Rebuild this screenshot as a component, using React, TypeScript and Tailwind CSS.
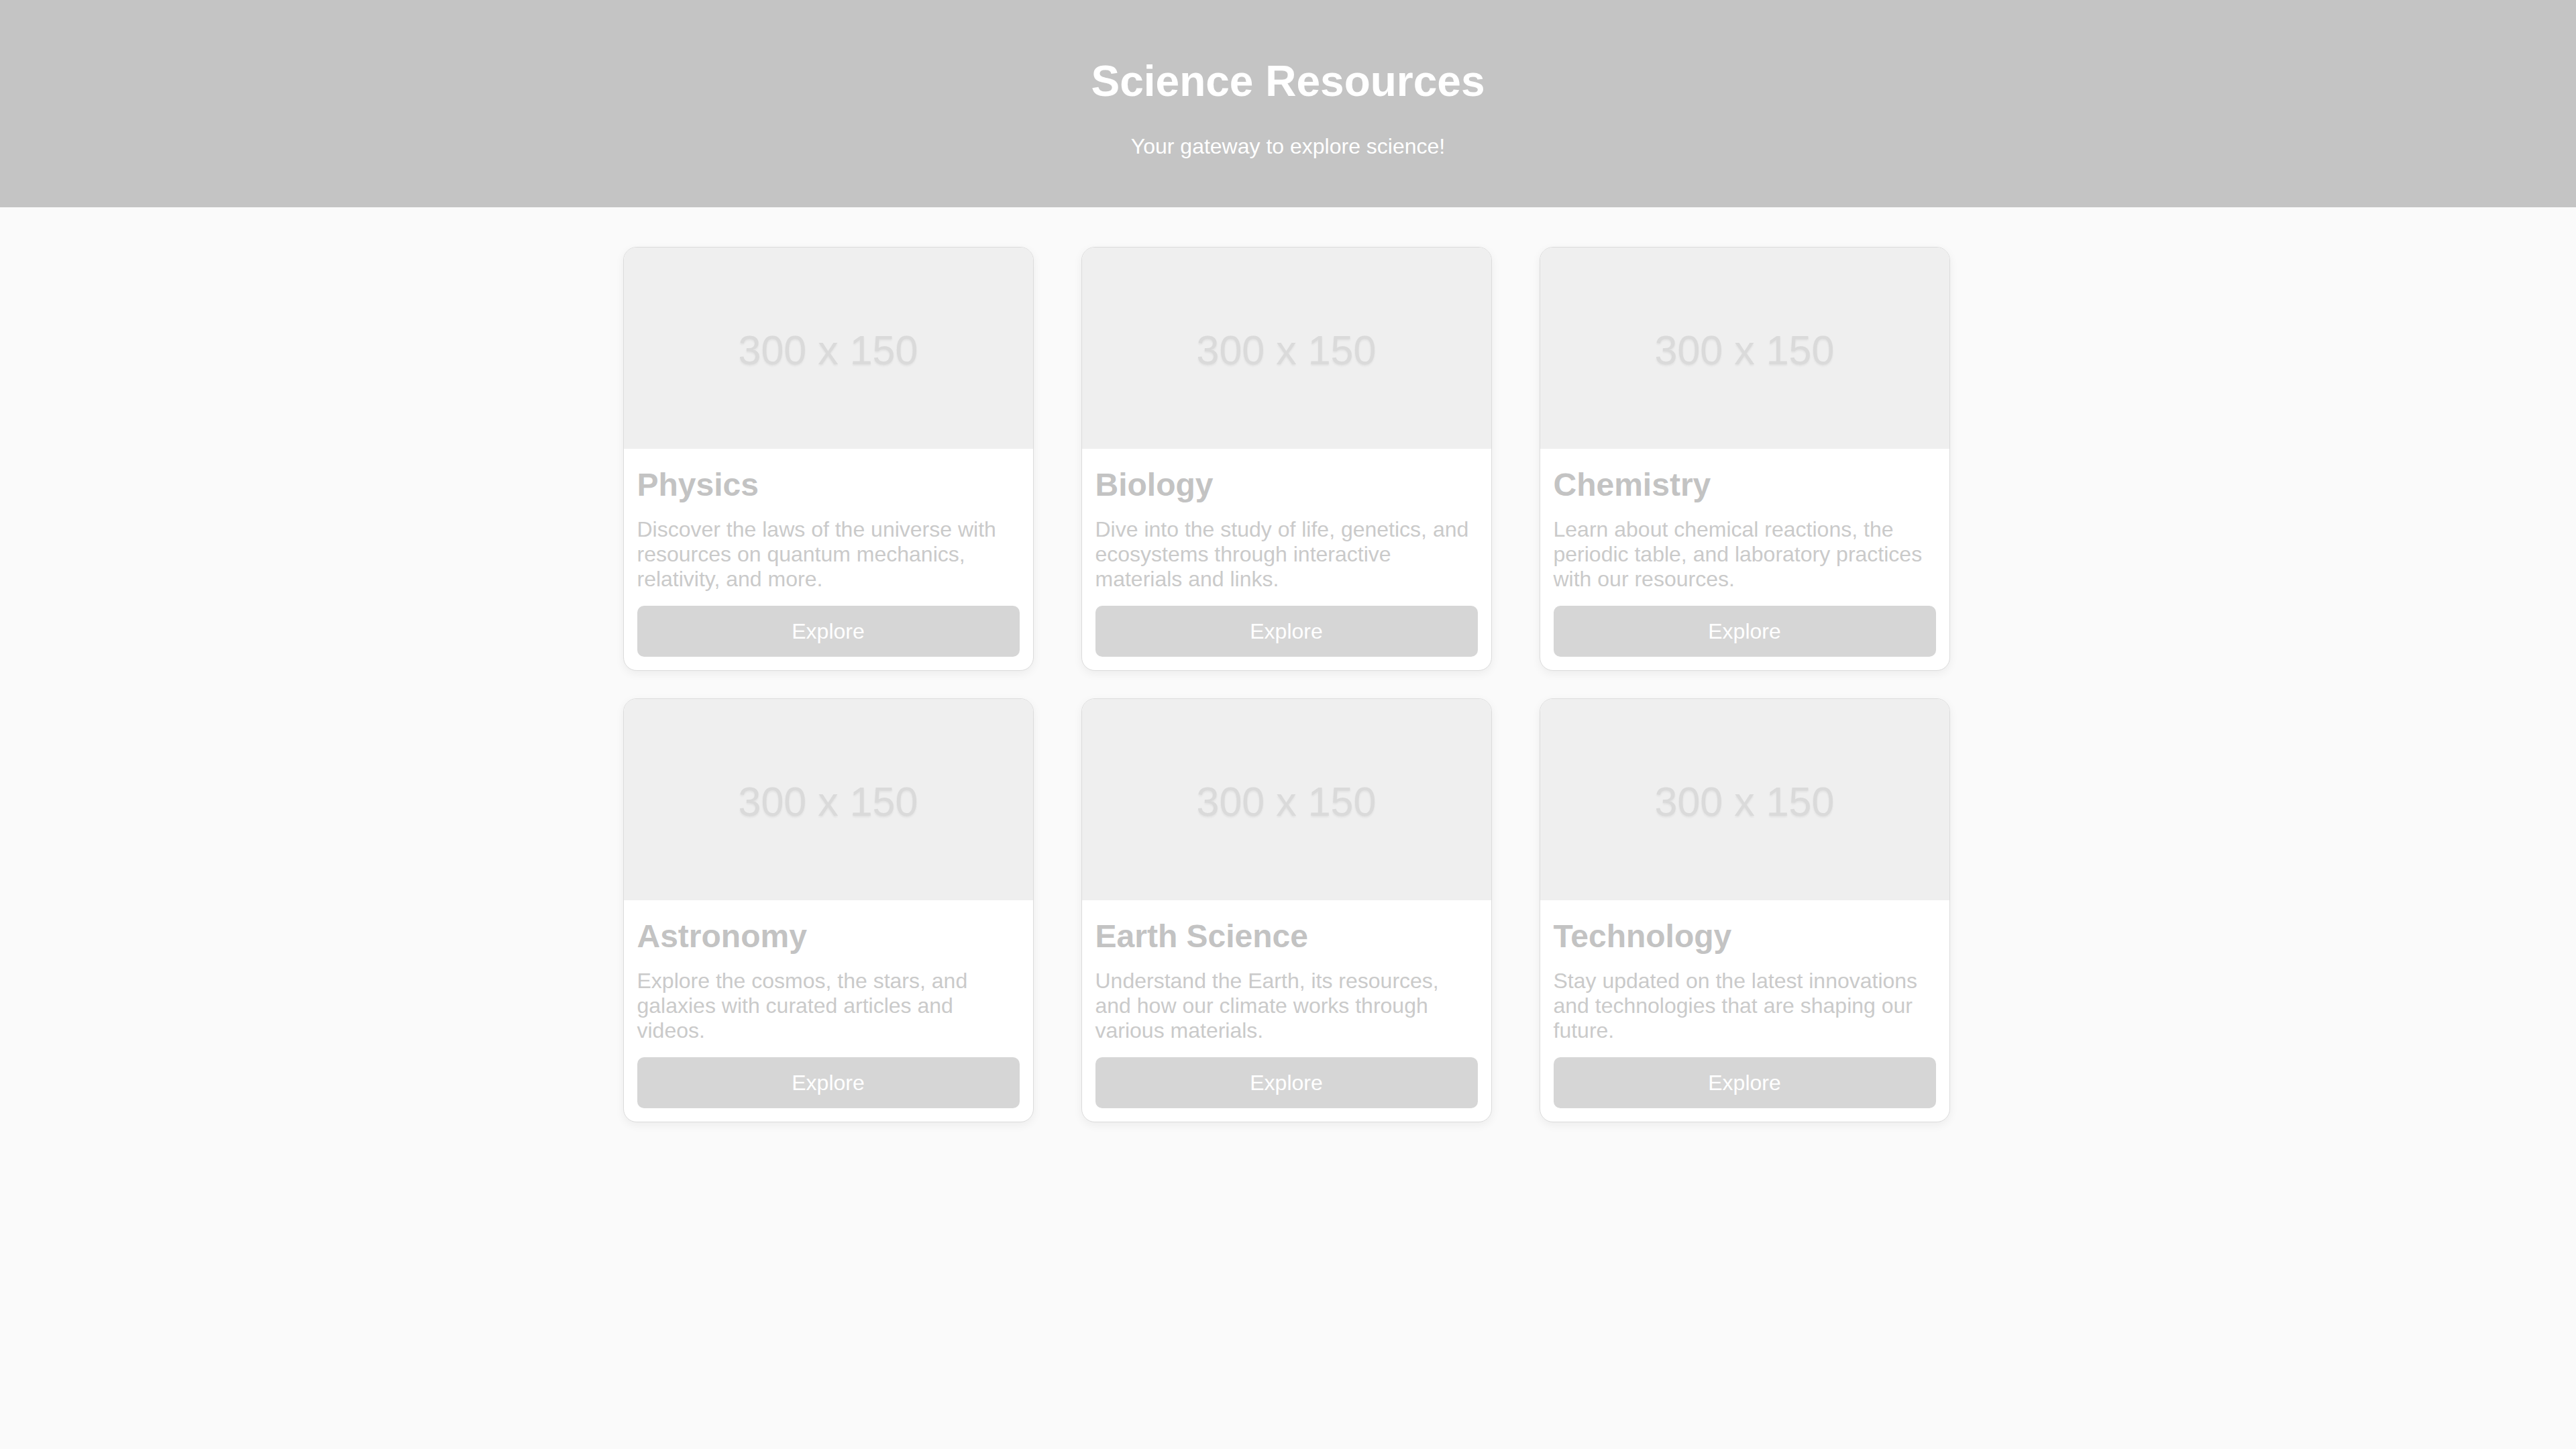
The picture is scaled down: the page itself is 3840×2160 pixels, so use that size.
import React from "react";

const cards = [
  {
    title: "Physics",
    desc: "Discover the laws of the universe with resources on quantum mechanics, relativity, and more.",
  },
  {
    title: "Biology",
    desc: "Dive into the study of life, genetics, and ecosystems through interactive materials and links.",
  },
  {
    title: "Chemistry",
    desc: "Learn about chemical reactions, the periodic table, and laboratory practices with our resources.",
  },
  {
    title: "Astronomy",
    desc: "Explore the cosmos, the stars, and galaxies with curated articles and videos.",
  },
  {
    title: "Earth Science",
    desc: "Understand the Earth, its resources, and how our climate works through various materials.",
  },
  {
    title: "Technology",
    desc: "Stay updated on the latest innovations and technologies that are shaping our future.",
  },
];

function Card({ title, desc }: { title: string; desc: string }) {
  return (
    <div className="w-[612px] bg-white rounded-[20px] border border-[#dcdcdc] shadow-[0_4px_14px_rgba(0,0,0,0.06)] overflow-hidden flex flex-col">
      <div className="h-[300px] bg-[#efefef] flex items-center justify-center pt-[5px]">
        <span className="text-[61px] leading-[70px] text-[#dadada] [text-shadow:0_2px_3px_rgba(0,0,0,0.06)]">
          300 x 150
        </span>
      </div>
      <div className="px-[20px] pt-[20px] pb-[20px] flex flex-col">
        <h3 className="mt-[6px] text-[48px] leading-[55px] font-bold text-[#c3c3c3]">{title}</h3>
        <p className="mt-[21px] text-[32px] leading-[37px] text-[#cacaca]">{desc}</p>
        <button className="mt-[21px] h-[76px] w-full rounded-[10px] bg-[#d6d6d6] text-white text-[32px] leading-[37px] flex items-center justify-center">
          Explore
        </button>
      </div>
    </div>
  );
}

export default function App() {
  return (
    <div className="min-h-[2160px] bg-[#fafafa] font-['Liberation_Sans',Arial,sans-serif]">
      <header className="h-[309px] bg-[#c4c4c4] flex flex-col items-center pt-[84px] text-white">
        <h1 className="text-[64px] leading-[74px] font-bold">Science Resources</h1>
        <p className="mt-[42px] text-[32px] leading-[37px]">Your gateway to explore science!</p>
      </header>
      <main className="flex justify-center pt-[59px] pr-[5px]">
        <div className="grid grid-cols-[612px_612px_612px] gap-x-[71px] gap-y-[41px]">
          {cards.map((c) => (
            <Card key={c.title} title={c.title} desc={c.desc} />
          ))}
        </div>
      </main>
    </div>
  );
}
